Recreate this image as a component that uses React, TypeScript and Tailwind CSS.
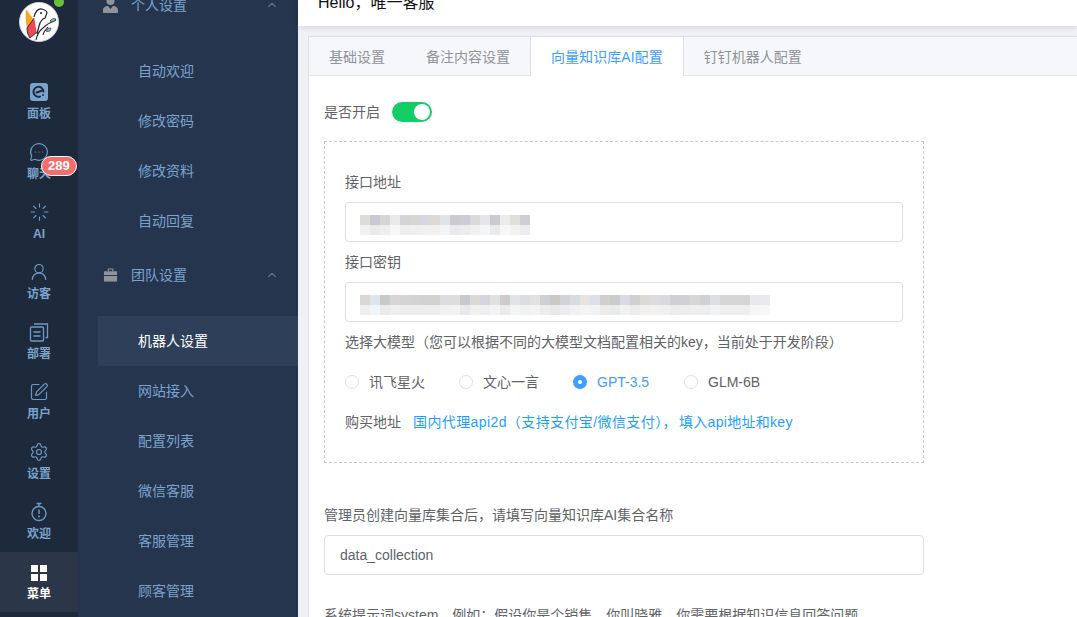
import { MessageCircleMore, Loader, UserRound, SquarePen, Settings, ChevronUp } from 'lucide-react';

const FONT = "font-['Liberation_Sans','Noto_Sans_CJK_SC',sans-serif]";

function PanelIcon() {
  return (
    <svg width="20" height="20" viewBox="0 0 20 20">
      <rect x="1" y="1" width="18" height="18" rx="3" fill="#7ba3cc" />
      <path d="M14.5 9.5A5 5 0 1 0 11 14.6" fill="none" stroke="#1d2a3b" strokeWidth="2" strokeLinecap="round" />
      <path d="M7.5 10.5l6-2" stroke="#1d2a3b" strokeWidth="2" strokeLinecap="round" />
      <circle cx="14" cy="13" r="1" fill="#1d2a3b" />
    </svg>
  );
}

function DeployIcon() {
  return (
    <svg width="20" height="20" viewBox="0 0 20 20" fill="none" stroke="#6f9ac5" strokeWidth="1.3">
      <rect x="1.5" y="5" width="13" height="14" rx="1" />
      <path d="M5 2h13.5v13.5h-2" />
      <path d="M4.5 10h7M4.5 14h7" />
    </svg>
  );
}

function WelcomeIcon() {
  return (
    <svg width="20" height="20" viewBox="0 0 20 20" fill="none" stroke="#6f9ac5" strokeWidth="1.4">
      <circle cx="10" cy="11.5" r="7" />
      <path d="M7.5 1.5h5M10 1.5v3" />
      <path d="M10 7.5v4.5" />
      <circle cx="10" cy="14.5" r="0.4" />
    </svg>
  );
}

function GridIcon() {
  return (
    <svg width="16" height="16" viewBox="0 0 16 16" fill="#fff">
      <rect x="0" y="0" width="7" height="7" />
      <rect x="9" y="0" width="7" height="7" />
      <rect x="0" y="9" width="7" height="7" />
      <rect x="9" y="9" width="7" height="7" />
    </svg>
  );
}

function PersonIcon() {
  return (
    <svg width="15" height="16" viewBox="0 0 15 16" fill="#909399">
      <circle cx="7.5" cy="4" r="4" />
      <path d="M0 16v-3c0-2.5 2.5-4 5-4l2.5 3 2.5-3c2.5 0 5 1.500 5 4v3z" />
    </svg>
  );
}

function Logo() {
  return (
    <svg width="40" height="40" viewBox="0 0 40 40">
      <circle cx="20" cy="20" r="19.500" fill="#fff" stroke="#cfd3d8" strokeWidth="1" />
      <path d="M7 7l8 11-7 8c-1.500-6-1.500-13-1-19z" fill="#f7a823" />
      <path d="M16 15c3 5 3 10 2 15l-7 6c-2-3-3-6-3-10z" fill="#ec4a56" stroke="#222" strokeWidth="0.9" />
      <path d="M15 15c1-5 4-9 8-8 3 1 5 3 5 4l-2 5c-3 1-5 4-6 8l-2 8" fill="#fff" stroke="#222" strokeWidth="1.200" />
      <circle cx="22" cy="11" r="1" fill="#222" />
      <path d="M17 38c1-5 3-9 7-12 3-3 8-6 13-8M24 33c0-3 3-5 5-8" fill="none" stroke="#222" strokeWidth="1.100" />
      <path d="M27 29c1-2 3-3 5-3 0 2-2 5-5 3zM31 19c1-2 4-3 6-2-1 2-3 4-6 2z" fill="#7db6d8" stroke="#222" strokeWidth="0.6" />
    </svg>
  );
}

const railItems = [
  { label: '面板', icon: <PanelIcon /> },
  { label: '聊天', icon: <MessageCircleMore size={20} strokeWidth={1.4} color="#6f9ac5" /> },
  { label: 'AI', icon: <Loader size={21} strokeWidth={1.3} color="#6f9ac5" /> },
  { label: '访客', icon: <UserRound size={20} strokeWidth={1.4} color="#6f9ac5" /> },
  { label: '部署', icon: <DeployIcon /> },
  { label: '用户', icon: <SquarePen size={20} strokeWidth={1.4} color="#6f9ac5" /> },
  { label: '设置', icon: <Settings size={20} strokeWidth={1.4} color="#6f9ac5" /> },
  { label: '欢迎', icon: <WelcomeIcon /> },
];

const personalMenu = ['自动欢迎', '修改密码', '修改资料', '自动回复'];
const teamMenu = ['机器人设置', '网站接入', '配置列表', '微信客服', '客服管理', '顾客管理'];

const redactA = ['#dcdcd9', '#c9c9d0', '#d5d5d5', '#e8eaec', '#d4d4d6', '#d8d6d5', '#d5d9dd', '#dcd9d8', '#e0e4e6', '#cbcbd0', '#cfcdd3', '#dadada', '#e4e6e8', '#cacacf', '#ebebeb', '#dfdfdb', '#cfced3'];
const redactB = ['#dbd7d4', '#dfe5ea', '#c8cac9', '#d8d4d5', '#d5d3d4', '#d3d3d4', '#d2d2d2', '#d1d3d1', '#dbdddf', '#dcdedc', '#c8c9cc', '#dbd9d7', '#d4d5db', '#e1e1e1', '#cfcbcc', '#dfe4e6', '#dcdddf', '#e0e1e0', '#cfd0d3', '#cbc9c8', '#d0d3d7', '#d7dce0', '#e7e3e2', '#dce0e7', '#d3cdcb', '#c9cccd', '#d8dce2', '#cfd0d2', '#dcd9d7', '#dcdcdf', '#dadadd', '#d0d0d2', '#d1d1d3', '#d8d5d6', '#d1d1d3', '#dbdfe0', '#d5d5d8', '#d5d5d6', '#d6d5d5', '#e8e9ea', '#e9eaeb'];

function Redacted({ colors }: { colors: string[] }) {
  return (
    <div className="flex flex-col mt-[6px]">
      <div className="flex">
        {colors.map((c, i) => (
          <div key={i} className="w-[10px] h-[10px]" style={{ backgroundColor: c }} />
        ))}
      </div>
      <div className="flex">
        {colors.map((c, i) => (
          <div key={i} className="w-[10px] h-[10px] opacity-40" style={{ backgroundColor: c }} />
        ))}
      </div>
    </div>
  );
}

function Radio({ label, checked, className }: { label: string; checked?: boolean; className: string }) {
  return (
    <div className={`flex items-center ${className}`}>
      {checked ? (
        <span className="w-[14px] h-[14px] rounded-full bg-[#409eff] flex items-center justify-center">
          <span className="w-1 h-1 rounded-full bg-white" />
        </span>
      ) : (
        <span className="w-[14px] h-[14px] rounded-full border border-[#dcdfe6] bg-white" />
      )}
      <span className={`ml-[10px] text-sm ${checked ? 'text-[#409eff]' : 'text-[#606266]'}`}>{label}</span>
    </div>
  );
}

export default function App() {
  return (
    <div className={`h-[617px] w-[1077px] overflow-hidden flex bg-[#f0f1f6] ${FONT}`}>
      {/* icon rail */}
      <div className="w-[78px] shrink-0 bg-[#1d2a3b] flex flex-col">
        <div className="h-[62px] relative flex justify-center pt-[2px]">
          <Logo />
          <span className="absolute left-[54px] top-[-3px] w-[10px] h-[10px] rounded-full bg-[#67c23a]" />
        </div>
        {railItems.map((item) => (
          <div key={item.label} className="h-[60px] relative flex flex-col items-center pt-[20px]">
            {item.icon}
            <span className="text-xs font-bold text-[#7ba3cc] leading-[16px] mt-[4px]">{item.label}</span>
            {item.label === '聊天' && (
              <span className="absolute left-[41px] top-[34px] h-[20px] px-[6px] rounded-[10px] bg-[#f56c6c] border border-white text-white text-[13px] font-bold leading-[18px]">
                289
              </span>
            )}
          </div>
        ))}
        <div className="h-[60px] mt-[10px] bg-[#2b3648] flex flex-col items-center pt-[13px]">
          <GridIcon />
          <span className="text-xs font-bold text-white leading-[16px] mt-[5px]">菜单</span>
        </div>
      </div>

      {/* sub menu */}
      <div className="w-[220px] shrink-0 bg-[#25354e] -mt-[20px]">
        <div className="h-[50px] flex items-center pl-[25px] pr-[19px]">
          <PersonIcon />
          <span className="ml-[13px] text-sm text-[#7ba3cc] flex-1">个人设置</span>
          <ChevronUp size={14} color="#5f6f84" />
        </div>
        <div className="mt-[16px]">
          {personalMenu.map((m) => (
            <div key={m} className="h-[50px] ml-[20px] pl-[40px] flex items-center text-sm text-[#7ba3cc]">{m}</div>
          ))}
        </div>
        <div className="h-[50px] mt-[4px] flex items-center pl-[25px] pr-[19px]">
          <svg width="15" height="14" viewBox="0 0 16 14" fill="#909399">
            <path d="M5 0h6v3H9.800V1.200H6.200V3H5z" />
            <rect x="1" y="3" width="14" height="4" />
            <rect x="1" y="8" width="14" height="6" />
          </svg>
          <span className="ml-[13px] text-sm text-[#7ba3cc] flex-1">团队设置</span>
          <ChevronUp size={14} color="#5f6f84" />
        </div>
        <div className="mt-[16px]">
          {teamMenu.map((m, i) => (
            <div
              key={m}
              className={`h-[50px] ml-[20px] pl-[40px] flex items-center text-sm ${i === 0 ? 'bg-[#2d3f59] text-white' : 'text-[#7ba3cc]'}`}
            >
              {m}
            </div>
          ))}
        </div>
      </div>

      {/* main */}
      <div className="flex-1 min-w-0 flex flex-col -mt-[34px]">
        <div className="h-[60px] shrink-0 bg-white shadow-[0_1px_6px_rgba(0,21,41,0.14)] flex items-center pl-[20px] pt-[13px] text-base text-[#111]">
          Hello，唯一客服
        </div>
        <div className="ml-[10px] mt-[10px] w-[800px] bg-white border border-[#dcdfe6]">
          <div className="h-[39px] bg-[#f5f7fa] flex border-b border-[#e4e7ed] text-sm leading-[40px] text-[#909399]">
            <div className="pl-[20px] pr-[20px]">基础设置</div>
            <div className="pl-[21px] pr-[20px]">备注内容设置</div>
            <div className="h-[39px] pl-[20px] pr-[20px] bg-white border-x border-[#dcdfe6] text-[#409eff] tracking-[0.05px]">向量知识库AI配置</div>
            <div className="pl-[20px] pr-[20px]">钉钉机器人配置</div>
          </div>
          <div className="pl-[15px] pt-[25px] text-sm text-[#606266] w-[615px]">
            <div className="flex items-center h-[21px]">
              <span>是否开启</span>
              <span className="ml-[12px] w-[40px] h-[20px] rounded-full bg-[#13ce66] flex justify-end items-center pr-[2px]">
                <span className="w-4 h-4 rounded-full bg-white" />
              </span>
            </div>
            <div className="mt-[19px] border border-dashed border-[#c8c9cc] p-[20px]">
              <div className="h-10 leading-10">接口地址</div>
              <div className="h-10 border border-[#dcdfe6] rounded flex items-center pl-[14px]">
                <Redacted colors={redactA} />
              </div>
              <div className="h-10 leading-10">接口密钥</div>
              <div className="h-10 border border-[#dcdfe6] rounded flex items-center pl-[14px]">
                <Redacted colors={redactB} />
              </div>
              <div className="h-10 leading-10">选择大模型（您可以根据不同的大模型文档配置相关的key，当前处于开发阶段）</div>
              <div className="h-10 flex items-center">
                <Radio label="讯飞星火" className="w-[114px]" />
                <Radio label="文心一言" className="w-[114px]" />
                <Radio label="GPT-3.5" checked className="w-[111px]" />
                <Radio label="GLM-6B" className="" />
              </div>
              <div className="h-10 flex items-center">
                <span>购买地址</span>
                <span className="ml-[12px] text-[#1e9fff] tracking-[0.4px]">国内代理api2d（支持支付宝/微信支付），</span>
                <span className="ml-[2px] text-[#1e9fff] tracking-[0.3px]">填入api地址和key</span>
              </div>
            </div>
            <div className="mt-[32px] h-10 leading-10">管理员创建向量库集合后，请填写向量知识库AI集合名称</div>
            <div className="h-10 border border-[#dcdfe6] rounded flex items-center pl-[15px]">data_collection</div>
            <div className="mt-[20px] h-10 leading-10">系统提示词system，例如：假设你是个销售，你叫晓雅，你需要根据知识信息回答问题</div>
          </div>
        </div>
      </div>
    </div>
  );
}
